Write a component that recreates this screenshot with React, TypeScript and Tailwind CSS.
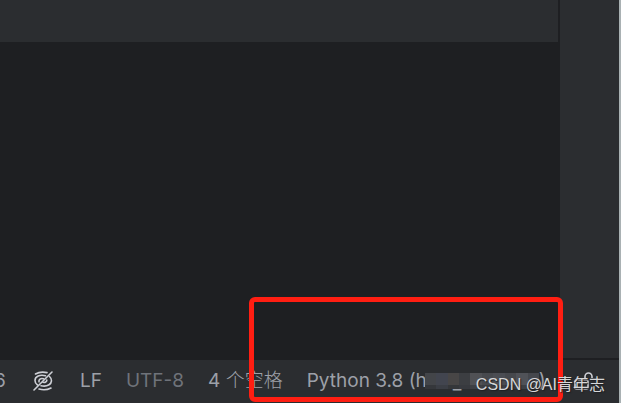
const item = 'text-[#9da0a8] whitespace-nowrap'

// Redacted environment name, drawn as blocks: [upper, lower]
const mosaic = [
  ['bg-[#434549]', 'bg-[#35373b]'],
  ['bg-[#42454f]', 'bg-[#3b3e45]'],
  ['bg-[#484646]', 'bg-[#35373a]'],
  ['bg-[#3c3e42]', 'bg-[#383a3f]'],
  ['bg-[#505155]', 'bg-[#3d3f44]'],
  ['bg-[#47494e]', 'bg-[#3a3c40]'],
  ['bg-[#4b4d53]', 'bg-[#3d3f44]'],
  ['bg-[#46484d]', 'bg-[#38393d]'],
  ['bg-[#505258]', 'bg-[#3c3f44]'],
  ['bg-[#45474d]', 'bg-[#37393d]'],
]

function HighlightOffIcon() {
  return (
    <svg viewBox="0 0 22 22" className="h-[22px] w-[22px]" fill="none" stroke="#ced0d6" strokeWidth="1.6" strokeLinecap="round">
      <path d="M3.5 4C6.5 2.2 11 1.8 15 2.6" />
      <path d="M13.5 5.8C8 4.2 3 6.5 3 10.5c0 2 1 3.5 2.5 4.5" />
      <path d="M17.5 6.5c3 2.5 2.5 6.500-.5 8.3-2.5 1.5-5.5 1.5-8 .9" />
      <path d="M7 19c4 1.2 8.5.8 12-1" />
      <path d="M11.5 8.8c-3-.8-5 .7-4.5 3" />
      <path d="M11 12.3c2 .5 4-.5 3.8-2.3" />
      <path d="M2 20 20 2" />
    </svg>
  )
}

function LockIcon() {
  return (
    <svg viewBox="0 0 20 20" className="h-5 w-5" fill="none" stroke="#ced0d6" strokeWidth="1.6">
      <rect x="1" y="9" width="13" height="9" rx="1.5" />
      <path d="M11 9V5.5a3.5 3.5 0 0 1 7 0V7" />
    </svg>
  )
}

function StatusBar() {
  return (
    <footer className="flex h-[45px] shrink-0 items-center border-t-2 border-[#1e1f22] bg-[#2b2d30] pb-0.5 text-[19px] leading-6">
      <span className={`${item} -ml-1.5 w-[38px]`}>6</span>
      <button aria-label="Highlighting off" className="mr-[26px]">
        <HighlightOffIcon />
      </button>
      <button className={`${item} mr-6`}>LF</button>
      <button className="mr-6 whitespace-nowrap text-[#6f737a]">UTF-8</button>
      <button className={`${item} mr-6`}>
        4 <span className="font-light">个空格</span>
      </button>
      <button className={`${item} flex items-center`}>
        Python 3.8 (h
        <span className="relative -ml-0.5 flex h-4 w-[114px]">
          <span className="absolute -top-0.5 left-7">_</span>
          {mosaic.map(([upper, lower], i) => (
            <span key={i} className="relative flex flex-1 flex-col">
              <span className={`h-3 ${upper}`} />
              <span className={`h-1 ${lower}`} />
            </span>
          ))}
        </span>
        )
      </button>
      <button aria-label="Unlocked" className="ml-7">
        <LockIcon />
      </button>
    </footer>
  )
}

export default function App() {
  return (
    <div className="relative flex min-h-screen flex-col overflow-hidden border-r-2 border-[#a9b1b3] bg-[#1e1f22] font-['Inter','Noto_Sans_CJK_SC',sans-serif]">
      <div className="flex flex-1">
        <main className="mr-0.5 flex-1">
          <div className="h-[42px] bg-[#2b2d30]" />
        </main>
        <aside className="w-[59px] bg-[#2b2d30]" />
      </div>
      <StatusBar />

      {/* Callout around the interpreter */}
      <div className="absolute right-14 bottom-px h-[105px] w-[314px] rounded-md border-5 border-[#ff1e12]" />
      <p className="absolute right-3.5 bottom-1.5 font-['Liberation_Sans','Noto_Sans_CJK_SC',sans-serif] text-[16px] leading-6 whitespace-nowrap text-[#d6d7d9] text-shadow-[1px_1px_1px_#1e1f22]">
        CSDN @AI青年志
      </p>
    </div>
  )
}
